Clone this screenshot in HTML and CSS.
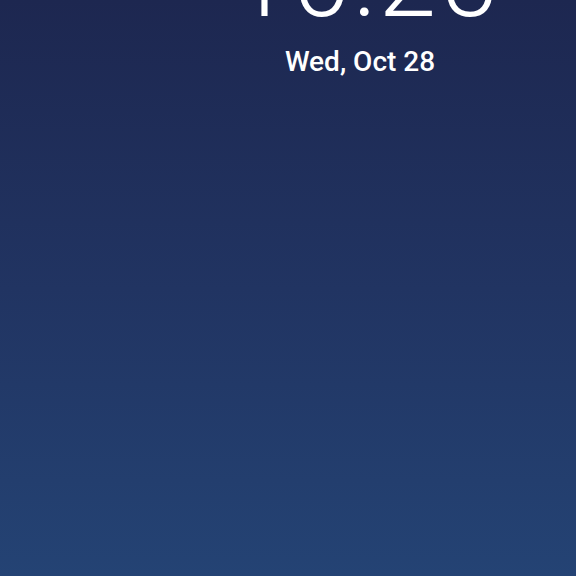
FILE: index.html
```html
<!DOCTYPE html>
<html>
<head>
<meta charset="utf-8">
<link rel="stylesheet" href="styles.css">
</head>
<body>
<main class="screen">
  <section class="clock-block">
    <div class="clock">10:25</div>
    <div class="date">Wed, Oct 28</div>
  </section>
</main>
</body>
</html>
```
FILE: styles.css
```css
html, body {
  margin: 0;
  padding: 0;
  height: 100%;
}
body {
  width: 576px;
  height: 576px;
  overflow: hidden;
  font-family: Roboto, "Liberation Sans", sans-serif;
}
.screen {
  height: 576px;
  background: linear-gradient(180deg, #1d2750 0%, #213462 50%, #244374 100%);
  display: flex;
  justify-content: center;
  padding-left: 144px;
  box-sizing: border-box;
}
.clock-block {
  display: flex;
  flex-direction: column;
  align-items: center;
  color: #ffffff;
}
.clock {
  font-size: 104px;
  font-weight: 300;
  line-height: 104px;
  margin-top: -71px;
  padding-left: 12px;
  letter-spacing: 3px;
  white-space: nowrap;
}
.date {
  font-size: 28px;
  font-weight: 500;
  line-height: 32px;
  margin-top: 13px;
  white-space: nowrap;
}
```
